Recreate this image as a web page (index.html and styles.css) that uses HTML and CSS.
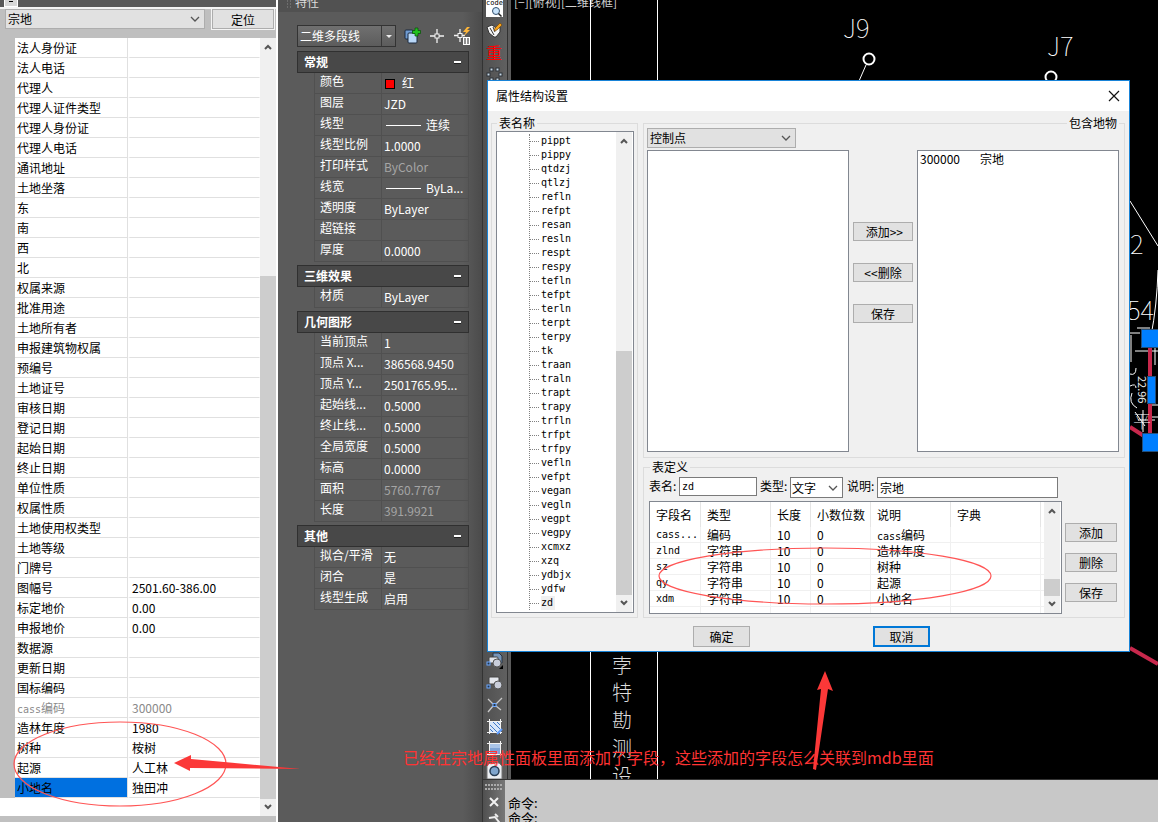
FILE: index.html
```html
<!DOCTYPE html>
<html lang="zh-CN">
<head>
<meta charset="utf-8">
<title>属性结构设置</title>
<link rel="stylesheet" href="styles.css">
</head>
<body>
<div class="app">

  <aside class="attrs">
    <div class="attrs-top"><button class="collapse" type="button" aria-label="折叠"></button></div>
    <div class="attrs-bar">
      <select class="combo" aria-label="地物类型"><option>宗地</option></select>
      <button class="btn locate" type="button">定位</button>
    </div>
    <div class="attrs-main">
      <div class="attrs-list">
        <table class="attr-table">
          <tbody>
            <tr><th>法人身份证</th><td></td></tr>
            <tr><th>法人电话</th><td></td></tr>
            <tr><th>代理人</th><td></td></tr>
            <tr><th>代理人证件类型</th><td></td></tr>
            <tr><th>代理人身份证</th><td></td></tr>
            <tr><th>代理人电话</th><td></td></tr>
            <tr><th>通讯地址</th><td></td></tr>
            <tr><th>土地坐落</th><td></td></tr>
            <tr><th>东</th><td></td></tr>
            <tr><th>南</th><td></td></tr>
            <tr><th>西</th><td></td></tr>
            <tr><th>北</th><td></td></tr>
            <tr><th>权属来源</th><td></td></tr>
            <tr><th>批准用途</th><td></td></tr>
            <tr><th>土地所有者</th><td></td></tr>
            <tr><th>申报建筑物权属</th><td></td></tr>
            <tr><th>预编号</th><td></td></tr>
            <tr><th>土地证号</th><td></td></tr>
            <tr><th>审核日期</th><td></td></tr>
            <tr><th>登记日期</th><td></td></tr>
            <tr><th>起始日期</th><td></td></tr>
            <tr><th>终止日期</th><td></td></tr>
            <tr><th>单位性质</th><td></td></tr>
            <tr><th>权属性质</th><td></td></tr>
            <tr><th>土地使用权类型</th><td></td></tr>
            <tr><th>土地等级</th><td></td></tr>
            <tr><th>门牌号</th><td></td></tr>
            <tr><th>图幅号</th><td>2501.60-386.00</td></tr>
            <tr><th>标定地价</th><td>0.00</td></tr>
            <tr><th>申报地价</th><td>0.00</td></tr>
            <tr><th>数据源</th><td></td></tr>
            <tr><th>更新日期</th><td></td></tr>
            <tr><th>国标编码</th><td></td></tr>
            <tr class="muted"><th><span class="code">cass</span>编码</th><td>300000</td></tr>
            <tr><th>造林年度</th><td>1980</td></tr>
            <tr><th>树种</th><td>桉树</td></tr>
            <tr><th>起源</th><td>人工林</td></tr>
            <tr class="selected"><th>小地名</th><td>独田冲</td></tr>
          </tbody>
        </table>
      </div>
      <div class="scroll attrs-scroll">
        <button class="up" type="button" aria-label="向上"></button><i class="space"></i><i class="thumb"></i><button class="down" type="button" aria-label="向下"></button>
      </div>
    </div>
  </aside>

  <aside class="props">
    <header class="props-title"><svg width="6" height="10"><path d="M1 1h1M4 1h1M1 4h1M4 4h1M1 7h1M4 7h1" stroke="#8a8a8a"/></svg><span>特性</span></header>
    <div class="props-tools">
      <select class="dark-combo" aria-label="对象类型"><option>二维多段线</option></select>
      <button class="tool" type="button" aria-label="切换">
        <svg width="18" height="18" viewBox="0 0 18 18"><rect x="2" y="3" width="8" height="9" rx="1" fill="#6f9bd1" stroke="#1c2b40"/><rect x="5" y="6" width="9" height="10" rx="1" fill="#b9d7f7" stroke="#1c2b40"/><path d="M12 1h3v2.500h2.500v3h-2.500v2.500h-3v-2.500h-2.500v-3h2.500z" fill="#21c11f" stroke="#064d06" stroke-width=".7"/></svg>
      </button>
      <button class="tool" type="button" aria-label="选择对象">
        <svg width="18" height="18" viewBox="0 0 18 18"><path d="M9 2v5M9 11v5M2 9h5M11 9h5" stroke="#f2f2f2" stroke-width="1.300"/><rect x="7" y="7" width="4" height="4" fill="#555" stroke="#f2f2f2"/></svg>
      </button>
      <button class="tool" type="button" aria-label="快速选择">
        <svg width="18" height="18" viewBox="0 0 18 18"><path d="M7 2v5M7 10v5M1 8.500h4M9 8.500h3" stroke="#f2f2f2" stroke-width="1.300"/><rect x="5" y="6.500" width="4" height="4" fill="#555" stroke="#f2f2f2"/><path d="M14 0l-4 5h3l-2 4 6-6h-3l3-3z" fill="#ffb638"/><rect x="10" y="10" width="7" height="8" fill="#fff"/><path d="M11 12h2M14 12h2M11 14h2M14 14h2M11 16h2M14 16h2" stroke="#222"/></svg>
      </button>
    </div>

    <section class="prop-group">
      <h2>常规<button type="button" aria-label="折叠常规"></button></h2>
      <table>
        <tr><th>颜色</th><td><i class="swatch"></i>红</td></tr>
        <tr><th>图层</th><td>JZD</td></tr>
        <tr><th>线型</th><td><i class="stroke"></i>连续</td></tr>
        <tr><th>线型比例</th><td>1.0000</td></tr>
        <tr class="off"><th>打印样式</th><td>ByColor</td></tr>
        <tr><th>线宽</th><td><i class="stroke"></i>ByLa...</td></tr>
        <tr><th>透明度</th><td>ByLayer</td></tr>
        <tr><th>超链接</th><td></td></tr>
        <tr><th>厚度</th><td>0.0000</td></tr>
      </table>
    </section>
    <section class="prop-group">
      <h2>三维效果<button type="button" aria-label="折叠三维效果"></button></h2>
      <table>
        <tr><th>材质</th><td>ByLayer</td></tr>
      </table>
    </section>
    <section class="prop-group">
      <h2>几何图形<button type="button" aria-label="折叠几何图形"></button></h2>
      <table>
        <tr><th>当前顶点</th><td>1</td></tr>
        <tr><th>顶点 X...</th><td>386568.9450</td></tr>
        <tr><th>顶点 Y...</th><td>2501765.95...</td></tr>
        <tr><th>起始线...</th><td>0.5000</td></tr>
        <tr><th>终止线...</th><td>0.5000</td></tr>
        <tr><th>全局宽度</th><td>0.5000</td></tr>
        <tr><th>标高</th><td>0.0000</td></tr>
        <tr class="off"><th>面积</th><td>5760.7767</td></tr>
        <tr class="off"><th>长度</th><td>391.9921</td></tr>
      </table>
    </section>
    <section class="prop-group">
      <h2>其他<button type="button" aria-label="折叠其他"></button></h2>
      <table>
        <tr><th>拟合/平滑</th><td>无</td></tr>
        <tr><th>闭合</th><td>是</td></tr>
        <tr><th>线型生成</th><td>启用</td></tr>
      </table>
    </section>
  </aside>

  <main class="work">
    <div class="drawing">
      <nav class="toolbar">
        <div class="tool-set top">
          <button class="tool" type="button" aria-label="查看编码"><svg width="17" height="17" viewBox="0 0 17 17"><rect width="17" height="17" fill="#fff"/><text x="0" y="5" class="code-icon">code</text><circle cx="10" cy="11" r="3.500" fill="#c9e4fb" stroke="#33506e"/><path d="M12.500 13.500l3 3" stroke="#222" stroke-width="1.500"/></svg></button>
          <button class="tool" type="button" aria-label="标注"><svg width="17" height="17" viewBox="0 0 17 17"><path d="M1 5l5-2 4 3 4-1v5l-4 5H8L3 11z" fill="#f6f6f6" stroke="#333"/><path d="M4 6l4 7M7 5l2 5" fill="none" stroke="#333"/><path d="M8 9l1-3 5-5 2 2-5 5z" fill="#f4a21c" stroke="#6b3d00" stroke-width=".6"/></svg></button>
          <button class="tool redo" type="button">重</button>
          <button class="tool" type="button" aria-label="点阵"><svg width="17" height="17" viewBox="0 0 17 17"><g fill="#c5d7e5" stroke="#2c3238"><rect x="4" y="2" width="3" height="3"/><rect x="10" y="2" width="3" height="3"/><rect x="1" y="7" width="3" height="3"/><rect x="13" y="7" width="3" height="3"/><rect x="4" y="12" width="3" height="3"/><rect x="10" y="12" width="3" height="3"/></g></svg></button>
        </div>
        <div class="tool-set bottom">
          <button class="tool" type="button" aria-label="插入块"><svg width="17" height="17" viewBox="0 0 17 17"><path d="M7 1h6l3 3v7H7z" fill="#7795b8" stroke="#263343"/><rect x="3" y="5" width="9" height="6" rx="1" fill="#dfe3ea" stroke="#444"/><circle cx="11" cy="11" r="4" fill="#c9cedb" stroke="#555"/><rect x="1" y="10" width="3" height="3" fill="#234" stroke="#6ca8ff"/><path d="M13 17h4v-4z"/></svg></button>
          <button class="tool" type="button" aria-label="创建块"><svg width="17" height="17" viewBox="0 0 17 17"><rect x="3" y="3" width="10" height="7" rx="1" fill="#e4e7ed" stroke="#444"/><circle cx="12" cy="11" r="4" fill="#c9cedb" stroke="#555"/><rect x="1" y="11" width="3" height="3" fill="#234" stroke="#6ca8ff"/></svg></button>
          <button class="tool" type="button" aria-label="点"><svg width="17" height="17" viewBox="0 0 17 17"><path d="M2 3l5 5M10 8l6-6M7 10l-5 6M10 10l5 4" stroke="#c9c9c9" stroke-width="1.300"/><rect x="7" y="7.500" width="3" height="3" fill="#234" stroke="#6ca8ff"/></svg></button>
          <button class="tool" type="button" aria-label="图案填充"><svg width="17" height="17" viewBox="0 0 17 17"><path d="M1 3.500h15M1 14.500h15M3.500 1v15M14.500 1v15" stroke="#f2f2f2"/><rect x="4" y="4" width="10" height="10" fill="#d7e7fa"/><path d="M4 7l7 7M4 11l3 3M7 4l7 7M11 4l3 3" stroke="#3f78c8"/><path d="M11 16l5-5" stroke="#5b9bff" stroke-width="2"/></svg></button>
          <button class="tool" type="button" aria-label="渐变色"><svg width="17" height="17" viewBox="0 0 17 17"><path d="M1 3.500h15M1 14.500h15M3.500 1v15M14.500 1v15" stroke="#f2f2f2"/><rect x="4" y="4" width="10" height="10" fill="#7ea3d6"/><path d="M4 4h10v4H4z" fill="#aac5e9"/></svg></button>
          <button class="tool" type="button" aria-label="面域"><svg width="17" height="17" viewBox="0 0 17 17"><path d="M1 17V4l3-3h9l3 3v13z" fill="#eceff3" stroke="#777"/><circle cx="8.500" cy="9" r="4.500" fill="#7fa5cd" stroke="#273d55" stroke-width="1.500"/></svg></button>
        </div>
      </nav>
      <div class="canvas">
        <svg class="plan" width="100%" height="100%">
          <text class="view" x="3" y="7">[−][俯视][二维线框]</text>
          <path d="M79.500 0v779M146.500 0v779" stroke="#fff" fill="none"/>
          <g class="vert">
            <text x="101" y="673">孛</text><text x="101" y="700">特</text><text x="101" y="728">勘</text><text x="101" y="756">测</text><text x="101" y="784">设</text>
          </g>
          <g class="labels">
            <text x="332" y="38">J9</text><text x="536" y="56">J7</text><text x="619" y="254">2</text><text x="616" y="320">54</text>
          </g>
          <g fill="none" stroke="#fff">
            <circle cx="358" cy="59" r="5.500" stroke-width="2"/><circle cx="540" cy="77" r="5.500" stroke-width="2"/>
            <path d="M355 65l-7 16M619 201l28 45M647 270q-1 35-7 66"/>
            <path d="M619 333h10M626 328h13M632 329v15M620 362v-27M624 351h23M638 330v27M644 345v20M619 374q6 2 6-6M619 386q6-3 6 2M621 393q-4 10 5 15M627 420h17M632 410v22M624 412l10 14M640 405h8M637 417h10"/>
          </g>
          <path d="M639 345v92M619 427l14 9M619 648l28 16" stroke="#c8284c" stroke-width="4" fill="none"/>
          <text class="dim" transform="translate(627 376) rotate(90)">22.96</text>
          <text class="cn-mark" x="622" y="428">平</text>
          <g fill="#007fff" stroke="#234f7c"><rect x="630.500" y="329.500" width="18" height="18"/><rect x="636.500" y="376.500" width="8" height="27"/><rect x="631.500" y="433.500" width="18" height="18"/></g>
        </svg>
      </div>
    </div>
    <footer class="command">
      <div class="command-grip">
        <svg width="18" height="7"><path d="M0 1h18M0 5h18" stroke="#aaa" stroke-width="2" stroke-dasharray="2 1"/></svg>
        <button class="tool" type="button" aria-label="关闭命令行"><svg width="10" height="10"><path d="M1 1l8 8M9 1l-8 8" stroke="#f1f1f1" stroke-width="2"/></svg></button>
        <svg width="14" height="12"><path d="M2 5l6-1 4 5v3" fill="none" stroke="#eee" stroke-width="2"/><path d="M8 1l3 3" stroke="#eee" stroke-width="2"/></svg>
      </div>
      <div class="command-log"><p>命令:</p><p>命令:</p></div>
    </footer>
  </main>

  <div class="dialog" role="dialog" aria-labelledby="dialog-title">
    <header class="dialog-title"><h1 id="dialog-title">属性结构设置</h1>
      <button class="tool" type="button" aria-label="关闭"><svg width="12" height="12"><path d="M1 1l10 10M11 1L1 11" stroke="#111" stroke-width="1.200"/></svg></button>
    </header>
    <div class="dialog-body">
      <fieldset class="group names">
        <legend>表名称</legend>
        <div class="box tree-box">
          <ul class="tree">
            <li>pippt</li><li>pippy</li><li>qtdzj</li><li>qtlzj</li><li>refln</li><li>refpt</li><li>resan</li><li>resln</li><li>respt</li><li>respy</li><li>tefln</li><li>tefpt</li><li>terln</li><li>terpt</li><li>terpy</li><li>tk</li><li>traan</li><li>traln</li><li>trapt</li><li>trapy</li><li>trfln</li><li>trfpt</li><li>trfpy</li><li>vefln</li><li>vefpt</li><li>vegan</li><li>vegln</li><li>vegpt</li><li>vegpy</li><li>xcmxz</li><li>xzq</li><li>ydbjx</li><li>ydfw</li><li><span class="current">zd</span></li>
          </ul>
          <div class="scroll tree-scroll">
            <button class="up" type="button" aria-label="向上"></button><i class="space"></i><i class="thumb"></i><button class="down" type="button" aria-label="向下"></button>
          </div>
        </div>
      </fieldset>

      <div class="right">
        <fieldset class="group features">
          <legend>包含地物</legend>
          <select class="combo kind" aria-label="地物分类"><option>控制点</option></select>
          <div class="transfer">
            <div class="box"></div>
            <div class="transfer-buttons">
              <button class="btn" type="button">&nbsp;添加&gt;&gt;</button>
              <button class="btn" type="button">&lt;&lt;删除</button>
              <button class="btn" type="button">保存</button>
            </div>
            <ul class="box chosen"><li><span>300000</span><span>宗地</span></li></ul>
          </div>
        </fieldset>

        <fieldset class="group definition">
          <legend>表定义</legend>
          <div class="form">
            <label for="t-name">表名:</label><input class="short code" id="t-name" value="zd">
            <label for="t-type">类型:</label><select class="plain" id="t-type"><option>文字</option></select>
            <label for="t-note">说明:</label><input class="long" id="t-note" value="宗地">
          </div>
          <div class="fields">
            <div class="box fields-box">
              <table class="field-table">
                <colgroup><col class="c1"><col class="c2"><col class="c3"><col class="c4"><col class="c5"><col class="c6"><col></colgroup>
                <thead><tr><th>字段名</th><th>类型</th><th>长度</th><th>小数位数</th><th>说明</th><th>字典</th><th></th></tr></thead>
                <tbody>
                  <tr><td class="code">cass...</td><td>编码</td><td>10</td><td>0</td><td><span class="code">cass</span>编码</td><td></td><td></td></tr>
                  <tr><td class="code">zlnd</td><td>字符串</td><td>10</td><td>0</td><td>造林年度</td><td></td><td></td></tr>
                  <tr><td class="code">sz</td><td>字符串</td><td>10</td><td>0</td><td>树种</td><td></td><td></td></tr>
                  <tr><td class="code">qy</td><td>字符串</td><td>10</td><td>0</td><td>起源</td><td></td><td></td></tr>
                  <tr><td class="code">xdm</td><td>字符串</td><td>10</td><td>0</td><td>小地名</td><td></td><td></td></tr>
                  <tr class="rest"><td></td><td></td><td></td><td></td><td></td><td></td><td></td></tr>
                </tbody>
              </table>
              <div class="scroll fields-scroll">
                <button class="up" type="button" aria-label="向上"></button><i class="space"></i><i class="thumb"></i><button class="down" type="button" aria-label="向下"></button>
              </div>
            </div>
            <div class="field-buttons">
              <button class="btn" type="button">添加</button>
              <button class="btn" type="button">删除</button>
              <button class="btn" type="button">保存</button>
            </div>
          </div>
        </fieldset>
      </div>
    </div>
    <footer class="dialog-actions">
      <button class="btn" type="button">确定</button>
      <button class="btn default" type="button">取消</button>
    </footer>
  </div>

  <svg class="notes" width="100%" height="100%">
    <g fill="none" stroke="#f55" stroke-width="1.200"><ellipse cx="120" cy="764" rx="106" ry="42"/><ellipse cx="825" cy="576" rx="166" ry="28"/></g>
    <g fill="#fb3838"><path d="M174 763l17-8v4l110 10-111-1v3z"/><path d="M825 671l8 20-5-2-12 81-3-1 8-80-4 1z"/></g>
    <text x="403" y="764">已经在宗地属性面板里面添加了字段，这些添加的字段怎么关联到mdb里面</text>
  </svg>
</div>
</body>
</html>
```
FILE: styles.css
```css
* { box-sizing: border-box; }

body {
  margin: 0;
  font: 12px/16px "Noto Sans CJK SC", sans-serif;
  color: #000;
  background: #5b5b5b;
}

button, input, select { font: inherit; color: inherit; margin: 0; border-radius: 0; }
h1, h2, p, ul, fieldset { margin: 0; padding: 0; }
h1, h2, th { font-weight: normal; text-align: left; }
ul { list-style: none; }
table { border-collapse: separate; border-spacing: 0; table-layout: fixed; width: 100%; }
th, td { padding: 0; white-space: nowrap; overflow: hidden; }
svg { display: block; }

.app { position: relative; display: flex; min-height: 100vh; overflow: hidden; }
.tool { padding: 0; border: 0; background: none; display: grid; place-items: center; }
.code { font-family: "DejaVu Sans Mono", "Noto Sans CJK SC", monospace; font-size: 10px; }
span.code { line-height: 10px; }

.btn {
  padding: 0;
  height: 19px;
  line-height: 15px;
  border: 1px solid #adadad;
  background: #e1e1e1;
}

.combo, .plain, .dark-combo {
  appearance: none;
  height: 20px;
  padding: 0 18px 0 2px;
  line-height: 16px;
  border: 1px solid #adadad;
  background: #e1e1e1 url("data:image/svg+xml,%3Csvg xmlns='http://www.w3.org/2000/svg' width='10' height='6'%3E%3Cpath d='M1 1l4 4 4-4' fill='none' stroke='%23555' stroke-width='1.300'/%3E%3C/svg%3E") no-repeat right 4px center;
}
.plain { border-color: #7a7a7a; background-color: #fff; }

.scroll { display: flex; flex-direction: column; flex: none; width: 16px; background: #f0f0f0; }
.scroll button {
  flex: none;
  height: 17px;
  padding: 0;
  border: 0;
  background: url("data:image/svg+xml,%3Csvg xmlns='http://www.w3.org/2000/svg' width='8' height='6'%3E%3Cpath d='M1 5l3-3 3 3' fill='none' stroke='%23555' stroke-width='2'/%3E%3C/svg%3E") no-repeat center;
}
.scroll .down { transform: rotate(180deg); }
.scroll .thumb { background: #cdcdcd; }

/* attribute panel */
.attrs {
  display: flex;
  flex-direction: column;
  flex: none;
  width: 278px;
  background: #bfbfbf;
  border-right: 2px solid #fff;
}
.attrs-top { height: 9px; padding-left: 4px; background: #595959; border-bottom: 2px solid #f4f4f4; }
.collapse { display: block; width: 14px; height: 7px; padding: 0; border: 1px solid #fff; border-top: 0; background: linear-gradient(#000, #000) no-repeat center 1px / 4px 1px #d8d8d8; }
.attrs-bar { display: flex; gap: 7px; padding: 0 2px 9px 5px; }
.attrs-bar .combo { flex: 1; }
.locate { width: 62px; height: 20px; box-shadow: 0 0 0 1px #f4f4f4; }
.attrs-main { display: flex; flex: 1; border-bottom: 6px solid #c0c0c0; }
.attrs-list { flex: 1; background: #fff; }
.attr-table { border-left: 15px solid #bfbfbf; }
.attr-table tr { height: 20px; }
.attr-table th { width: 113px; padding-left: 2px; border-right: 1px solid #e0e0e0; border-bottom: 1px solid #e0e0e0; }
.attr-table td { padding-left: 2px; border-left: 2px solid #fff; border-bottom: 1px solid #e0e0e0; border-right: 1px solid #fff; }
.attr-table .muted { color: #8a8a8a; }
.attr-table .selected th { background: #0070e0; }
.attrs-scroll .space { flex: 220; }
.attrs-scroll .thumb { flex: 522; }

/* properties palette */
.props {
  flex: none;
  width: 204px;
  color: #fff;
  background: linear-gradient(90deg, #5b5b5b 185px, #4b4b4b);
}
.props-title {
  display: flex;
  align-items: flex-end;
  gap: 3px;
  height: 12px;
  padding: 0 0 2px 8px;
  overflow: hidden;
  color: #ddd;
  background: #515151;
}
.props-tools { display: flex; align-items: center; gap: 7px; padding: 13px 10px 4px 19px; }
.dark-combo {
  width: 99px;
  height: 22px;
  border-color: #333;
  background: url("data:image/svg+xml,%3Csvg xmlns='http://www.w3.org/2000/svg' width='14' height='20'%3E%3Cpath d='M.5 0v20' stroke='%23383838'/%3E%3Cpath d='M5 9h6l-3 3z' fill='%23eee'/%3E%3C/svg%3E") no-repeat right center, linear-gradient(#707070, #5c5c5c);
}
.prop-group { margin: 0 13px 3px 19px; }
.prop-group h2 {
  display: flex;
  align-items: center;
  justify-content: space-between;
  height: 22px;
  padding: 0 7px 0 6px;
  font-size: 12px;
  font-weight: bold;
  border: 1px solid #303030;
  background: #484848;
}
.prop-group h2 button { width: 7px; height: 3px; padding: 0; border: 0; border-bottom: 1px solid #222; background: #fff; }
.prop-group table { width: auto; margin-left: 17px; border-left: 1px solid #505050; }
.prop-group tr { height: 21px; }
.prop-group th { width: 67px; padding: 0 0 4px 5px; line-height: 16px; border: solid #505050; border-width: 0 1px 1px 0; }
.prop-group td { width: 87px; padding-left: 2px; border: solid #505050; border-width: 0 1px 1px 0; }
.prop-group .off td { color: #a5a5a5; }
.swatch { display: inline-block; width: 10px; height: 10px; margin: 0 7px 0 1px; vertical-align: -1px; border: 1px solid #000; background: #f00; }
.stroke { display: inline-block; width: 35px; height: 1px; margin: 0 5px 0 2px; vertical-align: 4px; background: #fff; }

/* drawing area */
.work { display: flex; flex-direction: column; flex: 1; min-width: 0; border-left: 1px solid #333; }
.drawing { display: flex; flex: 1; }
.toolbar {
  display: flex;
  flex-direction: column;
  justify-content: space-between;
  flex: none;
  width: 28px;
  padding-left: 3px;
  background: linear-gradient(90deg, #505050, #606060 24px, #303030 24px, #303030 25px, #5b5b5b 25px);
}
.tool-set { display: flex; flex-direction: column; align-items: flex-start; gap: 5px; }
.toolbar .redo { color: #f00; font-size: 16px; line-height: 17px; }
.code-icon { font: 7px "DejaVu Sans Mono", monospace; }
.canvas { position: relative; flex: 1; background: #000; }
.plan { position: absolute; inset: 0; }
.view { font-size: 12px; fill: #d0d0d0; }
.vert { font: 20px "Noto Sans CJK SC", sans-serif; font-weight: 300; fill: #ddd; }
.labels { font: 26px "Noto Sans CJK SC", sans-serif; font-weight: 100; fill: #fff; }
.dim { font-size: 11px; fill: #eee; }
.cn-mark { font-size: 18px; font-weight: 100; fill: #fff; }

.command { display: flex; height: 43px; border-top: 1px solid #333; background: #c8c8c8; }
.command-grip { display: flex; flex-direction: column; align-items: center; gap: 6px; width: 22px; padding-top: 4px; overflow: hidden; background: linear-gradient(90deg, #505050, #777); }
.command-grip svg { flex: none; }
.command-log { padding: 15px 3px 0; font-size: 13px; line-height: 15px; overflow: hidden; }

/* table structure dialog */
.dialog {
  position: absolute;
  left: 487px;
  right: 28px;
  top: 80px;
  border: 1px solid #1883d7;
  background: #f0f0f0;
}
.dialog-title { display: flex; align-items: center; justify-content: space-between; height: 30px; padding: 0 9px 0 8px; background: #fff; }
.dialog-title h1 { font-size: 12px; }
.dialog-body { display: grid; grid-template-columns: 147px 1fr; gap: 5px; padding: 7px 4px 0 3px; }
.right { display: flex; flex-direction: column; gap: 4px; min-width: 0; }
.group { min-width: 0; border: 1px solid #dcdcdc; }
.group legend { height: 10px; line-height: 10px; padding: 0 2px; margin-left: 1px; }
.box { border: 1px solid #828790; background: #fff; }

.names { padding: 3px 3px 4px 4px; }
.tree-box { display: flex; justify-content: space-between; padding-right: 1px; }
.tree { margin: 2px 0 2px 32px; font: 10px/14px "DejaVu Sans Mono", monospace; border-left: 1px dotted #808080; }
.tree li { display: flex; align-items: center; height: 14px; gap: 2px; white-space: nowrap; }
.tree li::before { content: ""; width: 9px; border-top: 1px dotted #808080; }
.current { padding: 0 2px 0 0; background: #f0f0f0; }
.tree-scroll .space { flex: 202; }
.tree-scroll .thumb { flex: 244; }

.features { padding: 0 5px 5px 3px; }
.group.features legend { margin: 0 0 0 auto; }
.kind { display: block; width: 149px; }
.transfer { display: grid; grid-template-columns: 1fr 60px 1fr; gap: 4px; min-height: 302px; margin-top: 2px; }
.transfer-buttons { display: flex; flex-direction: column; gap: 22px; padding-top: 72px; }
.chosen { padding: 0 2px; }
.chosen li { display: flex; gap: 20px; }

.definition { padding: 5px 7px 3px 5px; }
.form { display: flex; align-items: flex-start; padding-right: 59px; margin-bottom: 3px; }
.form label { flex: none; width: 30px; line-height: 18px; }
.form input { height: 19px; padding: 0 2px; border: 1px solid #7a7a7a; background: #fff; min-width: 0; }
.form .short { width: 78px; margin-right: 3px; }
.form .plain { width: 53px; height: 21px; margin-right: 4px; padding-left: 1px; }
.form .long { flex: 1; height: 21px; }
.fields { display: flex; gap: 3px; }
.fields-box { display: flex; flex: 1; min-width: 0; padding-right: 1px; }
.field-table { flex: 1; width: 0; }
.c1 { width: 51px; }
.c2 { width: 70px; }
.c3 { width: 40px; }
.c4 { width: 60px; }
.c5 { width: 80px; }
.c6 { width: 90px; }
.field-table th { height: 25px; padding-left: 6px; border-right: 1px solid #e5e5e5; }
.field-table td { height: 16px; padding-left: 6px; line-height: 14px; border: solid #f0f0f0; border-width: 0 1px 1px 0; }
.field-table th:last-child, .field-table td:last-child { padding: 0; border-right: 0; }
.field-table .rest td { height: 6px; border-bottom: 0; }
.fields-scroll .space { flex: 59; }
.fields-scroll .thumb { flex: 17; }
.field-buttons { display: flex; flex-direction: column; gap: 11px; width: 52px; padding-top: 22px; }

.dialog-actions { display: flex; justify-content: center; gap: 123px; padding: 8px 0 4px 6px; }
.dialog-actions .btn { width: 57px; height: 21px; }
.dialog-actions .default { line-height: 15px; border: 2px solid #0078d7; }

/* markup over the screen */
.notes { position: absolute; inset: 0; pointer-events: none; }
.notes text { font-size: 16px; fill: #f33; }
```
